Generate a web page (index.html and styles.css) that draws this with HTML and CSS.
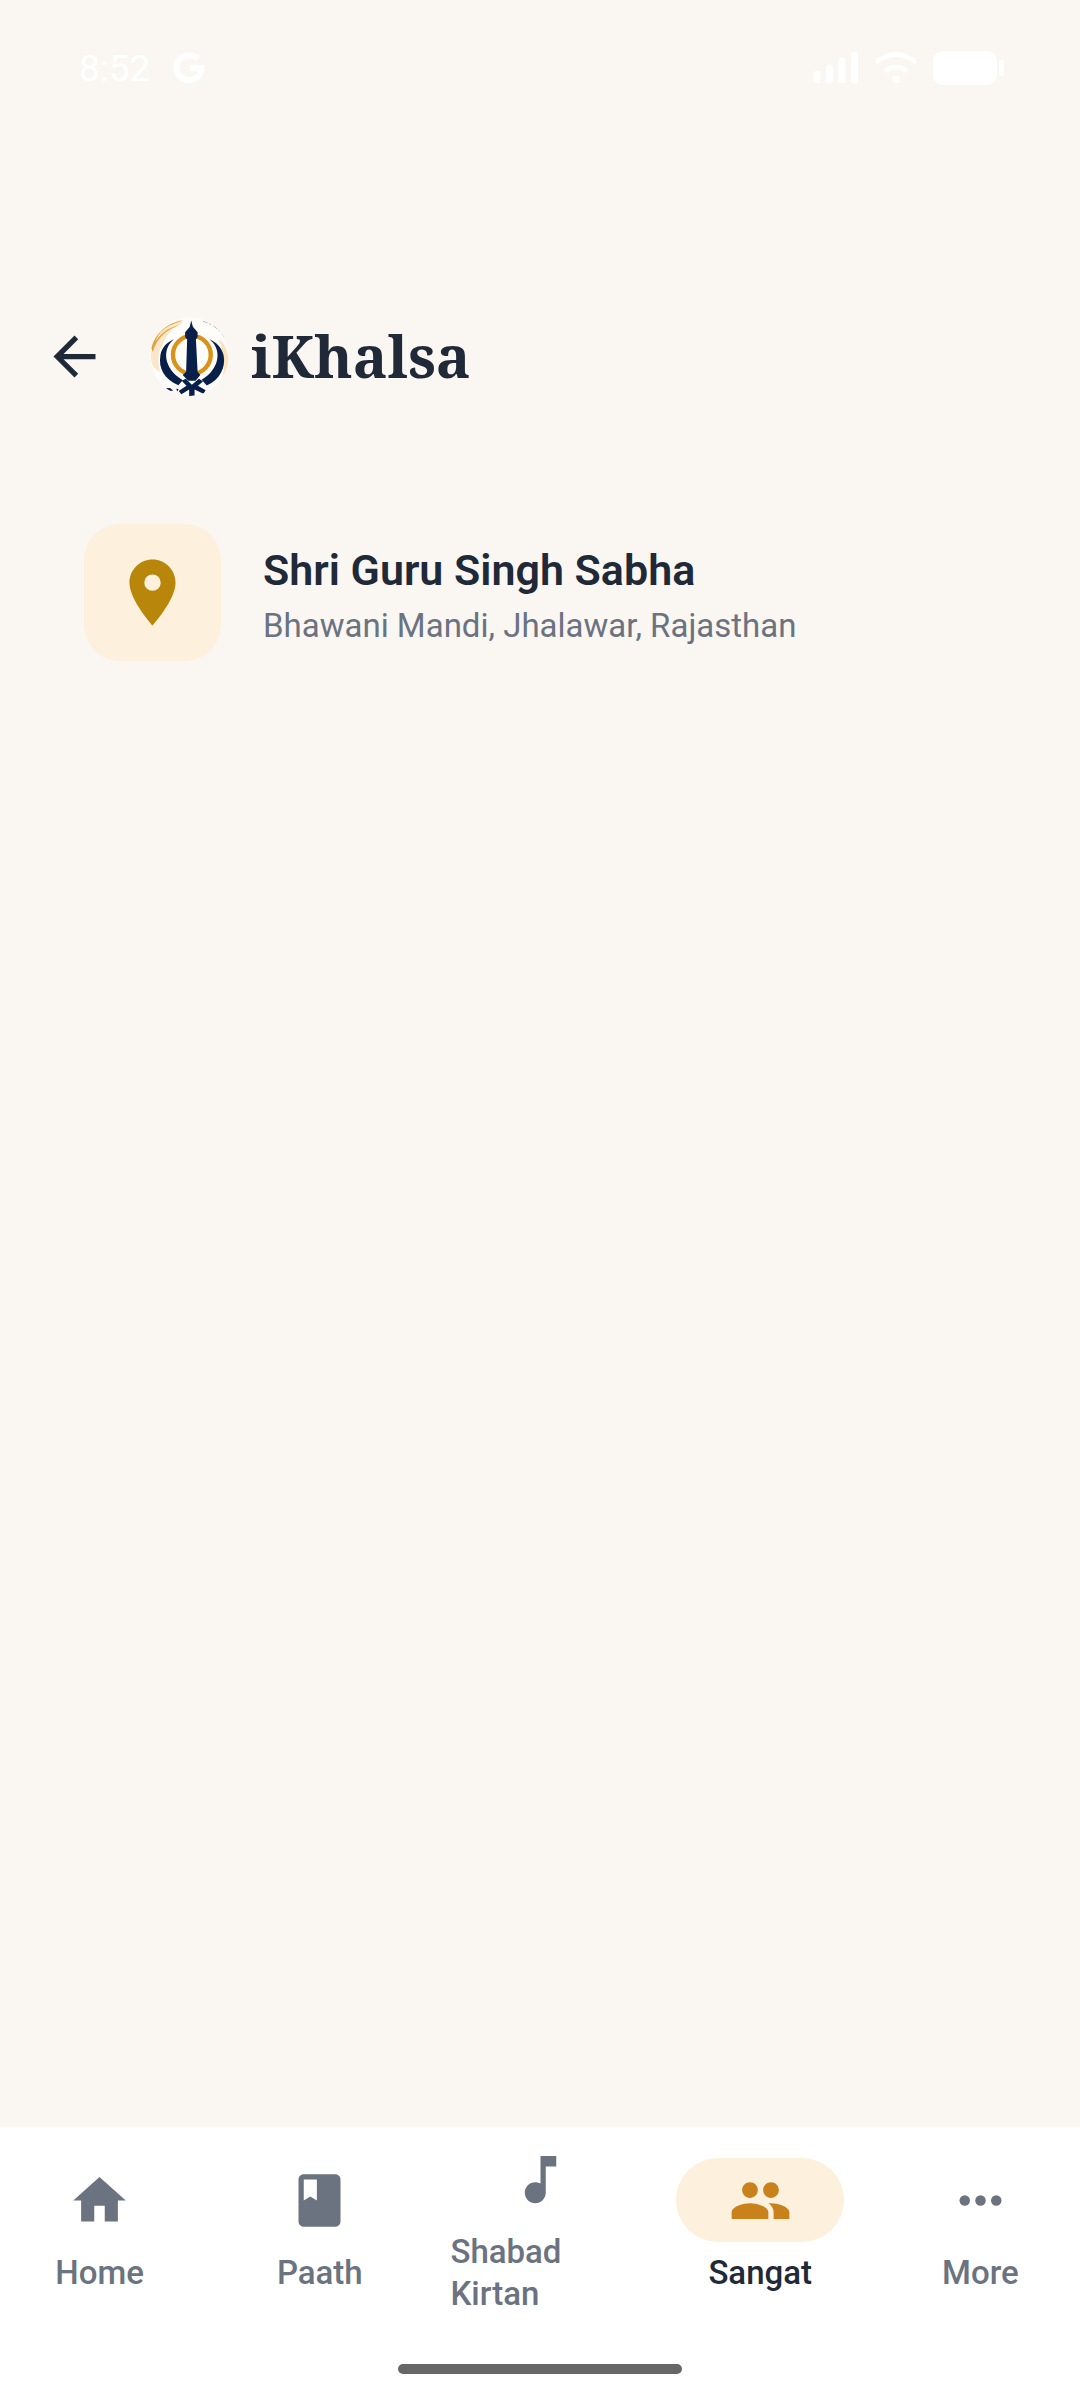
FILE: index.html
```
<!DOCTYPE html>
<html lang="en">
    <head>
        <meta charset="utf-8">
        <meta name="viewport" content="width=device-width, initial-scale=1.0">
        <title>iKhalsa</title>
        <link rel="stylesheet" href="styles.css">
    </head>
    <body>
        <div class="status-bar">
            <div class="status-left">
                <span>8:52</span>
                <svg width="34" height="34" viewBox="0 0 34 34">
                    <path d="M26 8A12.500 12.500 0 1 0 29.500 17H18" fill="none" stroke="currentColor" stroke-width="6"/>
                </svg>
            </div>
            <div class="status-right">
                <svg width="46" height="34" viewBox="0 0 46 34">
                    <path d="M4 23.500V29M16.500 17V29M29 10V29M41.500 4.500V29" fill="none" stroke="currentColor" stroke-width="7" stroke-linecap="round"/>
                </svg>
                <svg width="44" height="34" viewBox="0 0 44 34">
                    <path d="M4 10Q22-3 40 10M12.500 19Q22 13 31.500 19" fill="none" stroke="currentColor" stroke-width="5" stroke-linecap="round"/>
                    <circle cx="22" cy="28.500" r="4" fill="currentColor"/>
                </svg>
                <svg width="71" height="34" viewBox="0 0 71 34">
                    <rect width="64" height="34" rx="10" fill="currentColor"/>
                    <rect x="66" y="9" width="5" height="16" rx="2" fill="currentColor"/>
                </svg>
            </div>
        </div>

        <header class="top-bar">
            <button class="back" type="button" aria-label="Back">
                <svg class="icon" viewBox="0 0 24 24"><path d="M20 11H7.830l5.590-5.590L12 4l-8 8 8 8 1.410-1.410L7.830 13H20v-2z"/></svg>
            </button>
            <svg class="logo" viewBox="33 21 234 234">
                <circle cx="150" cy="138" r="116" fill="#fffdfa"/>
                <!-- brush wash -->
                <path d="M36 140C36 85 75 45 125 30L128 40C95 55 78 78 70 105C55 125 56 155 63 185C45 175 36 160 36 140z" fill="#fae6c8"/>
                <path d="M235 85C262 105 274 145 257 180L245 205C258 170 255 130 235 85z" fill="#fae2bf"/>
                <path d="M37 112C48 70 82 38 133 30L118 36C82 46 58 66 49 94C73 60 97 50 121 45C85 58 55 78 41 125z" fill="#e2a23b"/>
                <path d="M190 34C220 42 245 62 256 88" fill="none" stroke="#9298a6" stroke-width="2" stroke-dasharray="14 5 7 8"/>
                <circle cx="157" cy="133" r="56" fill="#fffdfa" stroke="#d9931a" stroke-width="13"/>
                <!-- kirpans -->
                <path d="M104 87C68 115 72 174 130 208L117 223C75 206 57 173 64 133C68 111 83 96 104 87z" fill="#071f49"/>
                <path d="M209 87C246 115 242 174 186 207L201 224C241 205 258 170 251 134C245 111 230 96 209 87z" fill="#071f49"/>
                <!-- khanda -->
                <path d="M155 31L160 50L174 66V80L169 88L174 183L182 193L168 210H146L130 193L140 183L143 88L137 80V66L151 50z" fill="#071f49"/>
                <path d="M127 210L139 204L157 222L178 204L190 212L175 225L198 238L191 248L165 236V255H149V236L126 250L118 240L141 225z" fill="#071f49"/>
                <path d="M80 232L92 231L102 239L88 241zM111 233L118 236L113 242z" fill="#071f49"/>
            </svg>
            <h1>iKhalsa</h1>
        </header>

        <main>
            <div class="place">
                <div class="place-icon">
                    <svg viewBox="0 0 24 24"><path d="M12 2C8.130 2 5 5.130 5 9c0 5.250 7 13 7 13s7-7.750 7-13c0-3.870-3.130-7-7-7zm0 9.500a2.500 2.500 0 0 1 0-5 2.500 2.500 0 0 1 0 5z"/></svg>
                </div>
                <div class="place-text">
                    <h2>Shri Guru Singh Sabha</h2>
                    <p>Bhawani Mandi, Jhalawar, Rajasthan</p>
                </div>
            </div>
        </main>

        <footer>
            <nav class="tabs">
                <a class="tab" href="#home">
                    <span class="pill"><svg class="icon" viewBox="0 0 24 24"><path d="M10 20v-6h4v6h5v-8h3L12 3 2 12h3v8z"/></svg></span>
                    <span>Home</span>
                </a>
                <a class="tab" href="#paath">
                    <span class="pill"><svg class="icon" viewBox="0 0 24 24"><path d="M18 2H6c-1.100 0-2 .900-2 2v16c0 1.100.900 2 2 2h12c1.100 0 2-.900 2-2V4c0-1.100-.900-2-2-2zM6 4h5v8l-2.500-1.500L6 12V4z"/></svg></span>
                    <span>Paath</span>
                </a>
                <a class="tab" href="#kirtan">
                    <span class="pill"><svg class="icon" viewBox="0 0 24 24"><path d="M12 3v10.550c-.590-.340-1.270-.550-2-.550-2.210 0-4 1.790-4 4s1.790 4 4 4 4-1.790 4-4V7h4V3h-6z"/></svg></span>
                    <span>Shabad Kirtan</span>
                </a>
                <a class="tab active" href="#sangat" aria-current="page">
                    <span class="pill"><svg class="icon" viewBox="0 0 24 24"><path d="M16 11c1.660 0 2.990-1.340 2.990-3S17.660 5 16 5c-1.660 0-3 1.340-3 3s1.340 3 3 3zm-8 0c1.660 0 2.990-1.340 2.990-3S9.660 5 8 5C6.340 5 5 6.340 5 8s1.340 3 3 3zm0 2c-2.330 0-7 1.170-7 3.500V19h14v-2.500c0-2.330-4.670-3.500-7-3.500zm8 0c-.290 0-.620.020-.970.050 1.160.840 1.970 1.970 1.970 3.450V19h6v-2.500c0-2.330-4.670-3.500-7-3.500z"/></svg></span>
                    <span>Sangat</span>
                </a>
                <a class="tab" href="#more">
                    <span class="pill"><svg class="icon" viewBox="0 0 24 24"><circle cx="6" cy="12" r="2"/><circle cx="12" cy="12" r="2"/><circle cx="18" cy="12" r="2"/></svg></span>
                    <span>More</span>
                </a>
            </nav>
            <div class="home-bar"></div>
        </footer>
    </body>
</html>
```
FILE: styles.css
```
body {
    display: flex;
    flex-direction: column;
    min-height: 100vh;
    margin: 0;
    background: #faf7f2;
    color: #1f2937;
    font-family: Roboto, sans-serif;
}
h1, h2, p {
    margin: 0;
}
svg {
    display: block;
}
.icon {
    width: 63px;
    height: 63px;
    fill: currentColor;
}
.status-bar {
    display: flex;
    justify-content: space-between;
    align-items: center;
    height: 136px;
    padding: 0 76px 0 79px;
    color: white;
    font-size: 37px;
}
.status-left {
    display: flex;
    align-items: center;
    gap: 22px;
}
.status-right {
    display: flex;
    align-items: center;
    gap: 15px;
}
.top-bar {
    display: flex;
    align-items: center;
    padding: 178px 43px 84px;
}
.back {
    padding: 0;
    border: 0;
    background: none;
    color: inherit;
}
.logo {
    width: 79px;
    height: 79px;
    margin: 0 22px 0 44px;
    border-radius: 50%;
}
h1 {
    font-family: "Noto Serif", "DejaVu Serif Condensed", "DejaVu Serif", serif;
    font-size: 58px;
    font-weight: bold;
    line-height: 84px;
}
main {
    flex: 1;
    padding: 42px 84px;
}
.place {
    display: flex;
    align-items: center;
    gap: 42px;
}
.place-icon {
    display: flex;
    align-items: center;
    justify-content: center;
    width: 137px;
    height: 137px;
    border-radius: 36px;
    background: #fdf0dc;
}
.place-icon svg {
    width: 79px;
    height: 79px;
    fill: #b8860b;
}
.place-text {
    padding-top: 4px;
}
h2 {
    font-size: 43px;
    font-weight: 600;
    line-height: 62px;
}
.place-text p {
    color: #6b7280;
    font-size: 33px;
    line-height: 50px;
}
footer {
    padding: 10px 0 26px;
    background: white;
}
.tabs {
    display: flex;
    align-items: center;
    gap: 21px;
}
.tab {
    display: flex;
    flex: 1 1 0;
    flex-direction: column;
    align-items: center;
    gap: 10px;
    min-width: 0;
    padding: 0 10px;
    color: #6b7280;
    font-size: 33px;
    font-weight: 500;
    line-height: 42px;
    text-decoration: none;
}
.pill {
    display: flex;
    align-items: center;
    justify-content: center;
    width: 168px;
    height: 84px;
    border-radius: 42px;
}
.active {
    color: #1f2937;
}
.active .pill {
    background: #fdf0dc;
    color: #c9821b;
}
.home-bar {
    width: 284px;
    height: 10px;
    margin: 49px auto 0;
    border-radius: 5px;
    background: #676767;
}
```
